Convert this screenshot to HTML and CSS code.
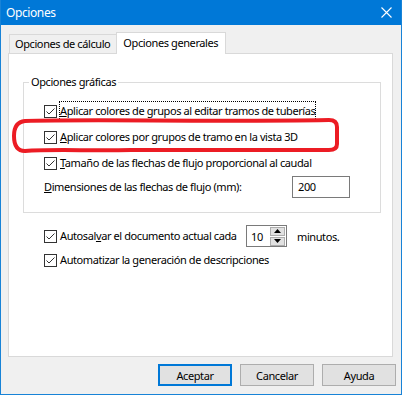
FILE: index.html
```html
<!DOCTYPE html>
<html lang="es">
<head>
    <meta charset="UTF-8">
    <title>Opciones</title>
    <link rel="stylesheet" href="styles.css">
</head>
<body>
    <div class="ventana">
        <div class="titulo">
            <span>Opciones</span>
            <svg class="cerrar" width="11" height="11" viewBox="0 0 11 11">
                <path d="M0.5 0.5 L10.5 10.5 M10.5 0.5 L0.5 10.5" stroke="#fff" stroke-width="1.1" fill="none"/>
            </svg>
        </div>
        <div class="contenido">
            <div class="pestanas">
                <div class="pestana">Opciones de cálculo</div>
                <div class="pestana activa">Opciones generales</div>
            </div>
            <div class="panel">
                <fieldset class="grupo">
                    <legend>Opciones gráficas</legend>
                    <div class="fila">
                        <span class="casilla"><svg width="13" height="13" viewBox="0 0 13 13"><rect x="0.5" y="0.5" width="12" height="12" fill="#fff" stroke="#333"/><path d="M2.5 6.5 L5 9 L10.5 3.5" stroke="#333" fill="none"/></svg></span>
                        <span class="texto foco"><u>A</u>plicar colores de grupos al editar tramos de tuberías</span>
                    </div>
                    <div class="fila">
                        <span class="casilla"><svg width="13" height="13" viewBox="0 0 13 13"><rect x="0.5" y="0.5" width="12" height="12" fill="#fff" stroke="#333"/><path d="M2.5 6.5 L5 9 L10.5 3.5" stroke="#333" fill="none"/></svg></span>
                        <span class="texto"><u>A</u>plicar colores por grupos de tramo en la vista 3D</span>
                    </div>
                    <div class="fila">
                        <span class="casilla"><svg width="13" height="13" viewBox="0 0 13 13"><rect x="0.5" y="0.5" width="12" height="12" fill="#fff" stroke="#333"/><path d="M2.5 6.5 L5 9 L10.5 3.5" stroke="#333" fill="none"/></svg></span>
                        <span class="texto"><u>T</u>amaño de las flechas de flujo proporcional al caudal</span>
                    </div>
                    <div class="campo">
                        <span><u>D</u>imensiones de las flechas de flujo (mm):</span>
                        <span class="entrada">200</span>
                    </div>
                </fieldset>
                <div class="fila suelta">
                    <span class="casilla"><svg width="13" height="13" viewBox="0 0 13 13"><rect x="0.5" y="0.5" width="12" height="12" fill="#fff" stroke="#333"/><path d="M2.5 6.5 L5 9 L10.5 3.5" stroke="#333" fill="none"/></svg></span>
                    <span class="texto ancho">Autosal<u>v</u>ar el documento actual cada</span>
                    <span class="spin">
                        <span class="valor">10</span>
                        <span class="flechas">
                            <span class="flecha"><svg width="7" height="4" viewBox="0 0 7 4"><path d="M0 4 L3.5 0 L7 4 Z" fill="#000"/></svg></span>
                            <span class="flecha"><svg width="7" height="4" viewBox="0 0 7 4"><path d="M0 0 L3.5 4 L7 0 Z" fill="#000"/></svg></span>
                        </span>
                    </span>
                    <span class="minutos">minutos.</span>
                </div>
                <div class="fila suelta">
                    <span class="casilla"><svg width="13" height="13" viewBox="0 0 13 13"><rect x="0.5" y="0.5" width="12" height="12" fill="#fff" stroke="#333"/><path d="M2.5 6.5 L5 9 L10.5 3.5" stroke="#333" fill="none"/></svg></span>
                    <span class="texto">Automatizar la <u>g</u>eneración de descripciones</span>
                </div>
            </div>
            <div class="botones">
                <button class="boton principal">Aceptar</button>
                <button class="boton">Cancelar</button>
                <button class="boton">Ayuda</button>
            </div>
        </div>
        <!-- marca roja dibujada encima de la captura -->
        <svg class="marca" width="332" height="40" viewBox="0 0 332 40">
            <path d="M14 4 C80 2 200 5 318 3 Q326 3 326 10 L326 27 Q326 33 318 33 L120 33 C80 34 40 32 14 34 Q3 34 3 19 Q3 5 14 4 Z" stroke="#ec1c24" stroke-width="4" fill="none"/>
        </svg>
    </div>
</body>
</html>
```

FILE: styles.css
```css
body {
    margin: 0;
    font-family: "Noto Sans", sans-serif;
    font-size: 11px;
    letter-spacing: -0.4px;
    color: #000;
    background: #fff;
}

.ventana {
    position: relative;
    width: 402px;
    height: 395px;
    box-sizing: border-box;
    border: 1px solid #1883d7;
    border-top: none;
    background-color: #f0f0f0;
    display: flex;
    flex-direction: column;
}

.titulo {
    height: 25px;
    background-color: #0078d7;
    color: #fff;
    display: flex;
    align-items: center;
    justify-content: space-between;
    padding: 0 9px 0 5px;
    font-size: 12px;
}

.contenido {
    flex: 1;
    display: flex;
    flex-direction: column;
}

.pestanas {
    display: flex;
    align-items: flex-end;
    height: 21px;
    margin-top: 7px;
    padding-left: 8px;
}

.pestana {
    height: 19px;
    box-sizing: border-box;
    border: 1px solid #d9d9d9;
    border-bottom: none;
    padding: 0 6px 0 5px;
    line-height: 18px;
    white-space: nowrap;
    background-color: #f0f0f0;
}

.pestana.activa {
    height: 22px;
    margin-bottom: -1px;
    margin-left: -1px;
    padding: 0 7px 0 6px;
    line-height: 20px;
    background-color: #fff;
    position: relative;
    z-index: 1;
}

.panel {
    height: 304px;
    box-sizing: border-box;
    margin: 0 8px 0 7px;
    border: 1px solid #d9d9d9;
    background-color: #fff;
    padding: 20px 11px 0 14px;
}

.grupo {
    margin: 0;
    padding: 8px 0 14px 20px;
    border: 1px solid #dcdcdc;
}

.grupo legend {
    margin-left: -15px;
    padding: 0 2px;
    line-height: 16px;
}

.fila {
    height: 26px;
    display: flex;
    align-items: center;
}

.casilla {
    width: 13px;
    height: 13px;
    margin-right: 3px;
    display: flex;
}

.texto {
    line-height: 16px;
    white-space: nowrap;
}

.foco {
    outline: 1px dotted #000;
    outline-offset: 0;
    padding: 1px 0;
}

.campo {
    height: 23px;
    margin-top: -1px;
    display: flex;
    align-items: center;
    justify-content: space-between;
    padding-right: 30px;
}

.entrada {
    width: 58px;
    height: 22px;
    box-sizing: border-box;
    border: 1px solid #7a7a7a;
    padding-left: 5px;
    line-height: 20px;
}

.suelta {
    padding-left: 21px;
}

.grupo + .suelta {
    margin-top: 12px;
    height: 22px;
}

.ancho {
    width: 186px;
}

.spin {
    width: 41px;
    height: 22px;
    box-sizing: border-box;
    border: 1px solid #7a7a7a;
    display: flex;
    align-items: center;
    justify-content: space-between;
}

.valor {
    padding-left: 4px;
}

.flechas {
    display: flex;
    flex-direction: column;
    gap: 1px;
    margin-right: 1px;
}

.flecha {
    width: 15px;
    height: 9px;
    box-sizing: border-box;
    border: 1px solid #adadad;
    background-color: #e1e1e1;
    display: flex;
    align-items: center;
    justify-content: center;
}

.minutos {
    margin-left: 10px;
}

.botones {
    display: flex;
    justify-content: flex-end;
    gap: 8px;
    margin-top: 7px;
    padding-right: 5px;
}

.boton {
    width: 74px;
    height: 22px;
    box-sizing: border-box;
    border: 1px solid #adadad;
    background-color: #e1e1e1;
    font-family: inherit;
    font-size: 11px;
    letter-spacing: inherit;
    color: #000;
    padding: 0;
}

.boton.principal {
    border: 2px solid #0078d7;
}

.marca {
    position: absolute;
    left: 10px;
    top: 117px;
}
```
